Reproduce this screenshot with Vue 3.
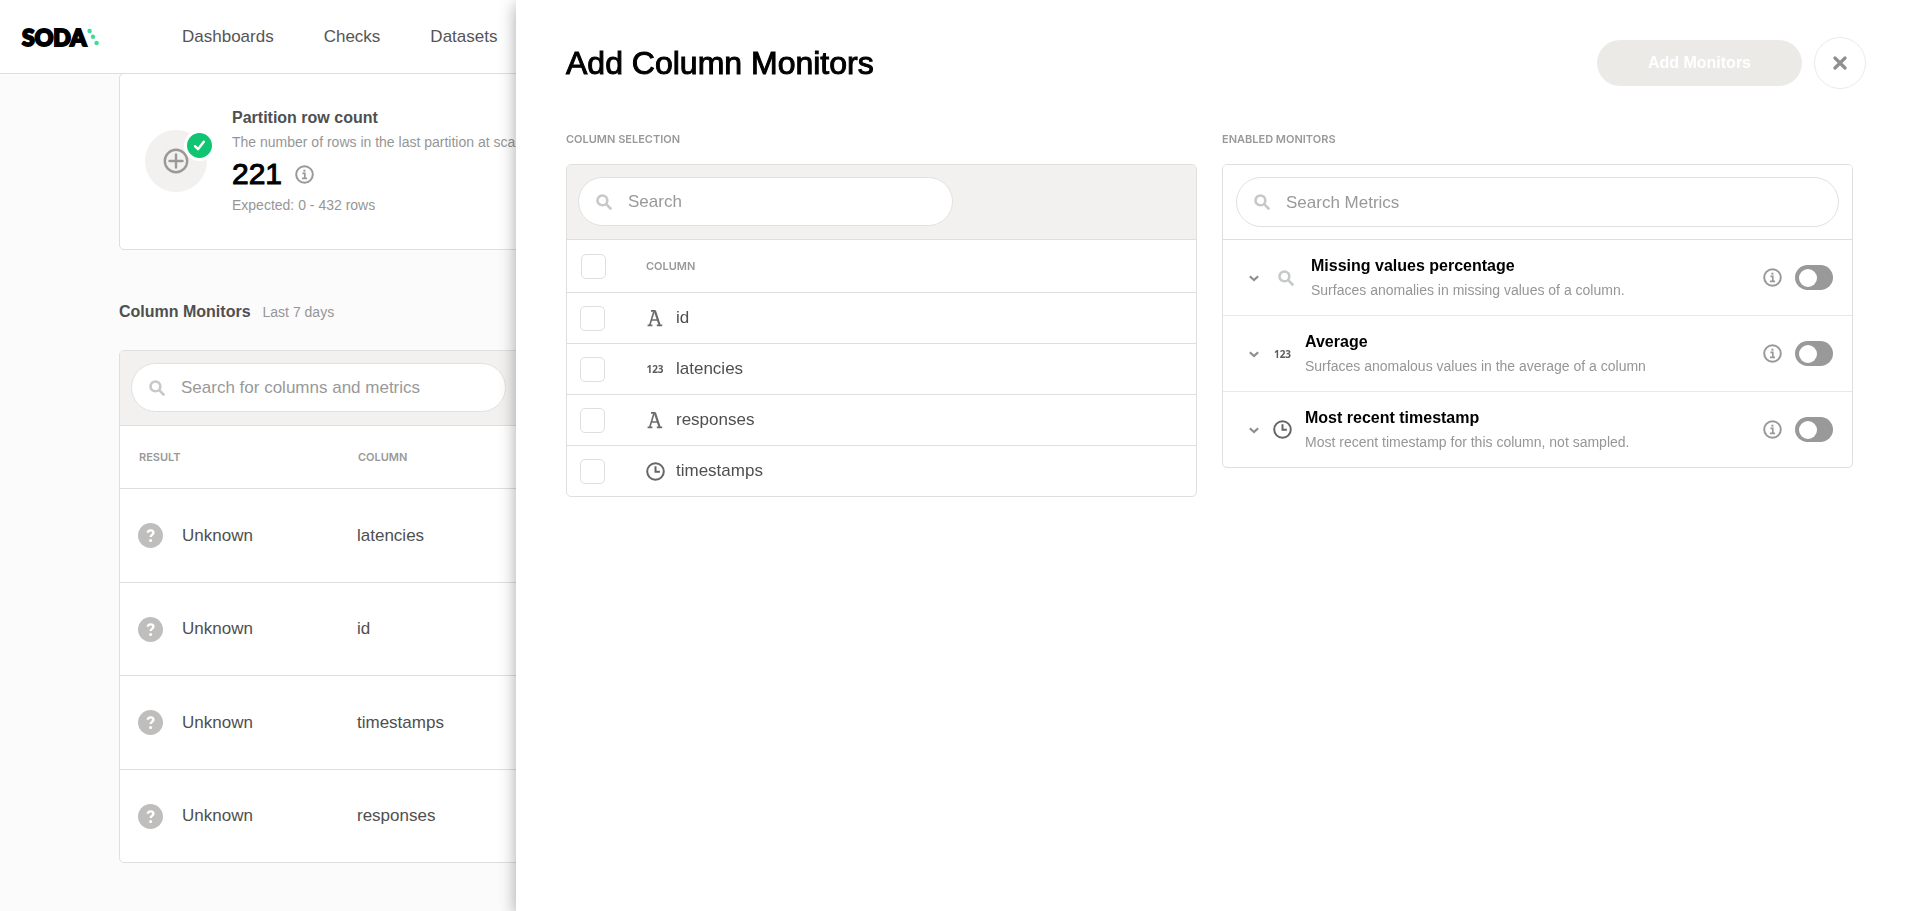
<script setup>
import { reactive, ref } from 'vue'

const navLinks = ['Dashboards', 'Checks', 'Datasets']

const results = ['latencies', 'id', 'timestamps', 'responses']

const columns = reactive([
  { name: 'id', type: 'text', selected: false },
  { name: 'latencies', type: 'number', selected: false },
  { name: 'responses', type: 'text', selected: false },
  { name: 'timestamps', type: 'time', selected: false },
])

const monitors = reactive([
  {
    id: 'missing',
    icon: 'search',
    title: 'Missing values percentage',
    text: 'Surfaces anomalies in missing values of a column.',
    enabled: false,
  },
  {
    id: 'average',
    icon: 'number',
    title: 'Average',
    text: 'Surfaces anomalous values in the average of a column',
    enabled: false,
  },
  {
    id: 'recent',
    icon: 'time',
    title: 'Most recent timestamp',
    text: 'Most recent timestamp for this column, not sampled.',
    enabled: false,
  },
])

const pageQuery = ref('')
const columnQuery = ref('')
const metricQuery = ref('')
const allSelected = ref(false)
</script>

<template>
  <div class="page">
    <header class="topbar">
      <a href="#" class="logo">
        <span class="logo-name">SODA</span>
        <svg class="logo-dots" width="12" height="18" viewBox="0 0 12 18" fill="#3ddc97" aria-hidden="true">
          <circle cx="2.6" cy="3" r="2.2" />
          <circle cx="6" cy="8.8" r="2.2" />
          <circle cx="9.6" cy="15" r="2.2" />
        </svg>
      </a>
      <nav class="nav">
        <a v-for="link in navLinks" :key="link" href="#">{{ link }}</a>
      </nav>
    </header>

    <main class="content">
      <section class="metric-card">
        <div class="metric-icon">
          <svg width="26" height="26" viewBox="0 0 26 26" fill="none" stroke="#999" stroke-width="2.4" stroke-linecap="round" aria-hidden="true">
            <circle cx="13" cy="13" r="11.2" />
            <path d="M13 6.5v13M6.5 13h13" />
          </svg>
          <span class="badge">
            <svg width="13" height="11" viewBox="0 0 13 11" fill="none" stroke="#fff" stroke-width="2.4" stroke-linecap="round" stroke-linejoin="round" aria-hidden="true">
              <path d="M2 6.2l3 3L10.8 1.8" />
            </svg>
          </span>
        </div>
        <div class="metric-body">
          <h3 class="metric-title">Partition row count</h3>
          <p class="metric-desc">The number of rows in the last partition at scan time</p>
          <div class="metric-value">
            <span class="big-number">221</span>
            <svg class="info" viewBox="0 0 19 19" aria-hidden="true">
              <circle cx="9.5" cy="9.5" r="8.3" fill="none" stroke="#999" stroke-width="2" />
              <path d="M7.4 8.4h2.4v4.6M7 13.3h5" fill="none" stroke="#999" stroke-width="1.7" />
              <rect x="8.4" y="4.7" width="2" height="2" fill="#999" />
            </svg>
          </div>
          <p class="metric-desc expected">Expected: 0 - 432 rows</p>
        </div>
      </section>

      <div class="section-head">
        <h2>Column Monitors</h2>
        <span>Last 7 days</span>
      </div>

      <section class="card">
        <div class="toolbar">
          <div class="search">
            <svg class="search-icon" viewBox="0 0 16 16" fill="none" stroke="#c6c9c8" stroke-width="2.6" stroke-linecap="round" aria-hidden="true">
              <circle cx="6.4" cy="6.4" r="4.9" />
              <path d="M10.2 10.2l4.3 4.3" />
            </svg>
            <input v-model="pageQuery" type="text" aria-label="Search for columns and metrics" placeholder="Search for columns and metrics" />
          </div>
        </div>
        <table class="results">
          <thead>
            <tr>
              <th class="result-col">RESULT</th>
              <th>COLUMN</th>
            </tr>
          </thead>
          <tbody>
            <tr v-for="name in results" :key="name">
              <td>
                <span class="status">
                  <svg width="25" height="25" viewBox="0 0 25 25" aria-hidden="true">
                    <circle cx="12.5" cy="12.5" r="12.5" fill="#bfbebd" />
                    <path d="M9.8 9.8c.1-1.6 1.2-2.4 2.8-2.4 1.7 0 2.8.9 2.8 2.3 0 1.9-2.7 2-2.7 4.4" fill="none" stroke="#fff" stroke-width="2.4" />
                    <circle cx="12.6" cy="17.5" r="1.5" fill="#fff" />
                  </svg>
                  Unknown
                </span>
              </td>
              <td>{{ name }}</td>
            </tr>
          </tbody>
        </table>
      </section>
    </main>

    <aside class="panel" role="dialog" aria-labelledby="panel-title">
      <div class="panel-head">
        <h1 id="panel-title">Add Column Monitors</h1>
        <button type="button" class="primary" disabled>Add Monitors</button>
        <button type="button" class="close" aria-label="Close">
          <svg width="14" height="14" viewBox="0 0 14 14" fill="none" stroke="#8f8f8f" stroke-width="3.2" stroke-linecap="round" aria-hidden="true">
            <path d="M2 2l10 10M12 2L2 12" />
          </svg>
        </button>
      </div>

      <div class="panel-grid">
        <section>
          <h2 class="caption">COLUMN SELECTION</h2>
          <div class="card">
            <div class="toolbar">
              <div class="search">
                <svg class="search-icon" viewBox="0 0 16 16" fill="none" stroke="#c6c9c8" stroke-width="2.6" stroke-linecap="round" aria-hidden="true">
                  <circle cx="6.4" cy="6.4" r="4.9" />
                  <path d="M10.2 10.2l4.3 4.3" />
                </svg>
                <input v-model="columnQuery" type="text" aria-label="Search" placeholder="Search" />
              </div>
            </div>
            <table class="picker">
              <thead>
                <tr>
                  <th class="check-col"><input v-model="allSelected" type="checkbox" class="box" aria-label="Select all columns" /></th>
                  <th>COLUMN</th>
                </tr>
              </thead>
              <tbody>
                <tr v-for="col in columns" :key="col.name">
                  <td class="check-col"><input :id="'col-' + col.name" v-model="col.selected" type="checkbox" class="box" /></td>
                  <td>
                    <label :for="'col-' + col.name" class="col-name">
                      <span class="type-icon">
                        <svg v-if="col.type === 'text'" width="18" height="18" viewBox="0 0 18 18" fill="none" stroke="#6b6b6b" aria-hidden="true">
                          <path d="M5 1.9h4.6M1.6 16.3h4.8M10.8 16.3h5.4M5.2 11h7.4" stroke-width="1.7" />
                          <path d="M3.8 16L8 2.2" stroke-width="1.6" />
                          <path d="M9 2.2L13.6 16" stroke-width="2.2" />
                        </svg>
                        <span v-else-if="col.type === 'number'" class="digits" aria-hidden="true">123</span>
                        <svg v-else width="19" height="19" viewBox="0 0 19 19" fill="none" stroke="#666" stroke-width="2" aria-hidden="true">
                          <circle cx="9.5" cy="9.5" r="8.3" />
                          <path d="M9.5 4.2v5.6h4.4" />
                        </svg>
                      </span>
                      {{ col.name }}
                    </label>
                  </td>
                </tr>
              </tbody>
            </table>
          </div>
        </section>

        <section>
          <h2 class="caption">ENABLED MONITORS</h2>
          <div class="card">
            <div class="toolbar plain">
              <div class="search">
                <svg class="search-icon" viewBox="0 0 16 16" fill="none" stroke="#c6c9c8" stroke-width="2.6" stroke-linecap="round" aria-hidden="true">
                  <circle cx="6.4" cy="6.4" r="4.9" />
                  <path d="M10.2 10.2l4.3 4.3" />
                </svg>
                <input v-model="metricQuery" type="text" aria-label="Search Metrics" placeholder="Search Metrics" />
              </div>
            </div>
            <ul class="monitors">
              <li v-for="m in monitors" :key="m.id">
                <button type="button" class="expand" :aria-label="'Expand ' + m.title">
                  <svg width="10" height="7" viewBox="0 0 10 7" fill="none" stroke="#8f8f8f" stroke-width="2.2" aria-hidden="true">
                    <path d="M.8 1.2L5 5l4.2-3.8" />
                  </svg>
                </button>
                <span class="monitor-icon" :class="{ wide: m.icon === 'search' }">
                  <svg v-if="m.icon === 'search'" class="search-icon" viewBox="0 0 16 16" fill="none" stroke="#c6c9c8" stroke-width="2.6" stroke-linecap="round" aria-hidden="true">
                    <circle cx="6.4" cy="6.4" r="4.9" />
                    <path d="M10.2 10.2l4.3 4.3" />
                  </svg>
                  <span v-else-if="m.icon === 'number'" class="digits" aria-hidden="true">123</span>
                  <svg v-else width="19" height="19" viewBox="0 0 19 19" fill="none" stroke="#666" stroke-width="2" aria-hidden="true">
                    <circle cx="9.5" cy="9.5" r="8.3" />
                    <path d="M9.5 4.2v5.6h4.4" />
                  </svg>
                </span>
                <div class="monitor-text">
                  <label :for="'toggle-' + m.id">{{ m.title }}</label>
                  <p>{{ m.text }}</p>
                </div>
                <svg class="info" viewBox="0 0 19 19" aria-hidden="true">
                  <circle cx="9.5" cy="9.5" r="8.3" fill="none" stroke="#999" stroke-width="2" />
                  <path d="M7.4 8.4h2.4v4.6M7 13.3h5" fill="none" stroke="#999" stroke-width="1.7" />
                  <rect x="8.4" y="4.7" width="2" height="2" fill="#999" />
                </svg>
                <input :id="'toggle-' + m.id" v-model="m.enabled" type="checkbox" role="switch" class="toggle" />
              </li>
            </ul>
          </div>
        </section>
      </div>
    </aside>
  </div>
</template>

<style>
body {
  margin: 0;
  background: #fbfbfb;
}
</style>

<style scoped>
.page {
  min-height: 100vh;
  box-sizing: border-box;
  overflow: hidden;
  background: #fbfbfb;
  color: #4f4f4f;
  font-family: "Liberation Sans", Arial, sans-serif;
  font-size: 17px;
  line-height: 24px;
}
h1, h2, h3, p, ul {
  margin: 0;
  padding: 0;
}
svg {
  display: block;
  flex: none;
}
button, input {
  font: inherit;
}

.topbar {
  position: relative;
  z-index: 1;
  box-sizing: border-box;
  height: 74px;
  padding: 0 22px;
  display: flex;
  align-items: center;
  background: #fff;
  border-bottom: 1px solid #dfdfde;
}
.logo {
  display: flex;
  align-items: center;
  width: 160px;
  color: #000;
  text-decoration: none;
}
.logo-name {
  font-family: Lato, "Liberation Sans", sans-serif;
  font-weight: 900;
  font-size: 23px;
  -webkit-text-stroke: 2px #000;
}
.logo-dots {
  margin-left: 1px;
}
.nav {
  display: flex;
  gap: 50px;
}
.nav a {
  color: #555;
  text-decoration: none;
}

.content {
  padding: 0 119px;
}
.metric-card {
  box-sizing: border-box;
  margin-top: -1px;
  padding: 32px 25px 33px;
  display: flex;
  align-items: center;
  gap: 25px;
  background: #fff;
  border: 1px solid #dfdfde;
  border-radius: 5px;
}
.metric-icon {
  position: relative;
  width: 62px;
  height: 62px;
  display: grid;
  place-items: center;
  border-radius: 50%;
  background: #f2f1ef;
}
.badge {
  position: absolute;
  top: 0;
  right: -8px;
  width: 25px;
  height: 25px;
  display: grid;
  place-items: center;
  border: 3px solid #fff;
  border-radius: 50%;
  background: #10c571;
}
.metric-title {
  font-size: 16px;
  font-weight: 700;
  line-height: 24px;
}
.metric-desc {
  color: #969696;
  font-size: 14px;
  white-space: nowrap;
}
.metric-value {
  height: 40px;
  display: flex;
  align-items: center;
  gap: 13px;
}
.big-number {
  color: #000;
  font-size: 30px;
  -webkit-text-stroke: 1px #000;
}
.expected {
  line-height: 22px;
}
.info {
  width: 19px;
  height: 19px;
}
.section-head {
  display: flex;
  align-items: center;
  gap: 12px;
  margin: 50px 0 26px;
}
.section-head h2 {
  font-size: 16px;
  font-weight: 700;
  line-height: 24px;
}
.section-head span {
  color: #969696;
  font-size: 14px;
}

.card {
  overflow: hidden;
  background: #fff;
  border: 1px solid #dfdfde;
  border-radius: 5px;
}
.toolbar {
  padding: 12px 12px 13px 11px;
  background: #f2f1ef;
  border-bottom: 1px solid #dfdfde;
}
.search {
  box-sizing: border-box;
  width: 375px;
  height: 49px;
  padding: 0 17px;
  display: flex;
  align-items: center;
  gap: 16px;
  background: #fff;
  border: 1px solid #e0e0df;
  border-radius: 25px;
}
.search-icon {
  width: 16px;
  height: 16px;
}
.search input {
  flex: 1;
  min-width: 0;
  padding: 1px 0 0;
  border: 0;
  outline: 0;
  background: none;
  color: #4f4f4f;
}
.search input::placeholder {
  color: #999;
  opacity: 1;
}
.toolbar.plain {
  padding: 12px 13px;
  background: #fff;
}
.toolbar.plain .search {
  width: auto;
  height: 50px;
}

table {
  width: 100%;
  table-layout: fixed;
  border-collapse: separate;
  border-spacing: 0;
}
th {
  color: #999;
  font-family: Inter, "Liberation Sans", sans-serif;
  font-size: 11px;
  font-weight: 600;
  text-align: left;
}
th, td {
  box-sizing: border-box;
  padding: 0;
  border-bottom: 1px solid #dfdfde;
}
tbody tr:last-child td {
  border-bottom: 0;
}
.results th {
  height: 63px;
  padding-left: 19px;
}
.results .result-col {
  width: 219px;
  padding-left: 19px;
}
.results td {
  height: 94px;
  padding-left: 18px;
}
.results tr:nth-child(even) td {
  height: 93px;
}
.results tr:last-child td {
  height: 92px;
}
.status {
  display: flex;
  align-items: center;
  gap: 19px;
}

.panel {
  position: fixed;
  z-index: 2;
  top: 0;
  right: 0;
  bottom: 0;
  width: calc(100% - 516px);
  box-sizing: border-box;
  padding: 37px 62px 37px 50px;
  overflow: auto;
  background: #fff;
  box-shadow: 0 4px 16px rgba(0, 0, 0, 0.35);
}
.panel-head {
  display: flex;
  align-items: center;
  margin-right: -13px;
}
.panel-head h1 {
  flex: 1;
  color: #000;
  font-size: 32px;
  font-weight: 400;
  line-height: 40px;
  -webkit-text-stroke: 1px #000;
}
.primary {
  height: 46px;
  padding: 0 51px;
  border: 0;
  border-radius: 23px;
  background: #ebeae7;
  color: #fff;
  font-size: 16px;
  font-weight: 700;
}
.close {
  width: 52px;
  height: 52px;
  margin-left: 12px;
  padding: 0;
  display: grid;
  place-items: center;
  border: 1px solid #ebebea;
  border-radius: 50%;
  background: #fff;
}
.panel-grid {
  display: grid;
  grid-template-columns: 1fr 1fr;
  gap: 25px;
  margin-top: 38px;
}
.caption {
  margin-bottom: 13px;
  color: #999;
  font-family: Inter, "Liberation Sans", sans-serif;
  font-size: 11px;
  font-weight: 600;
  line-height: 24px;
}

.picker th {
  height: 53px;
}
.picker td {
  height: 51px;
}
.picker tbody tr:last-child td {
  height: 50px;
}
.picker .check-col {
  width: 79px;
  padding-left: 13px;
}
.picker th.check-col {
  padding-left: 14px;
}
.box {
  appearance: none;
  box-sizing: border-box;
  display: block;
  width: 25px;
  height: 25px;
  margin: 0;
  border: 1px solid #dfdfde;
  border-radius: 5px;
  background: #fff;
}
.box:checked {
  background: #10c571;
}
.col-name {
  display: flex;
  align-items: center;
  gap: 12px;
}
.type-icon {
  width: 18px;
  height: 24px;
  display: grid;
  justify-content: center;
  align-items: center;
}
.digits {
  color: #5c5c5c;
  font-family: "Noto Sans", sans-serif;
  font-size: 10px;
  font-weight: 700;
  line-height: 24px;
}

.monitors {
  list-style: none;
}
.monitors li {
  box-sizing: border-box;
  height: 76px;
  padding: 0 19px 0 26px;
  display: flex;
  align-items: center;
  border-bottom: 1px solid #e8e8e7;
}
.monitors li:last-child {
  height: 75px;
  border-bottom: 0;
}
.expand {
  margin-right: 14px;
  padding: 2px 0 0;
  border: 0;
  background: none;
}
.monitor-icon {
  width: 19px;
  margin-right: 13px;
  display: grid;
  justify-content: center;
  align-items: center;
}
.monitor-icon.wide {
  width: 25px;
}
.monitor-text {
  flex: 1;
}
.monitor-text label {
  display: block;
  color: #000;
  font-size: 16px;
  font-weight: 700;
}
.monitor-text p {
  color: #969696;
  font-size: 14px;
}
.toggle {
  appearance: none;
  box-sizing: border-box;
  width: 38px;
  height: 25px;
  margin: 0 0 0 13px;
  padding: 0 4px;
  display: flex;
  align-items: center;
  border-radius: 13px;
  background: #999;
}
.toggle::before {
  content: "";
  width: 18px;
  height: 18px;
  border-radius: 50%;
  background: #fff;
}
.toggle:checked {
  justify-content: flex-end;
  background: #10c571;
}
</style>
